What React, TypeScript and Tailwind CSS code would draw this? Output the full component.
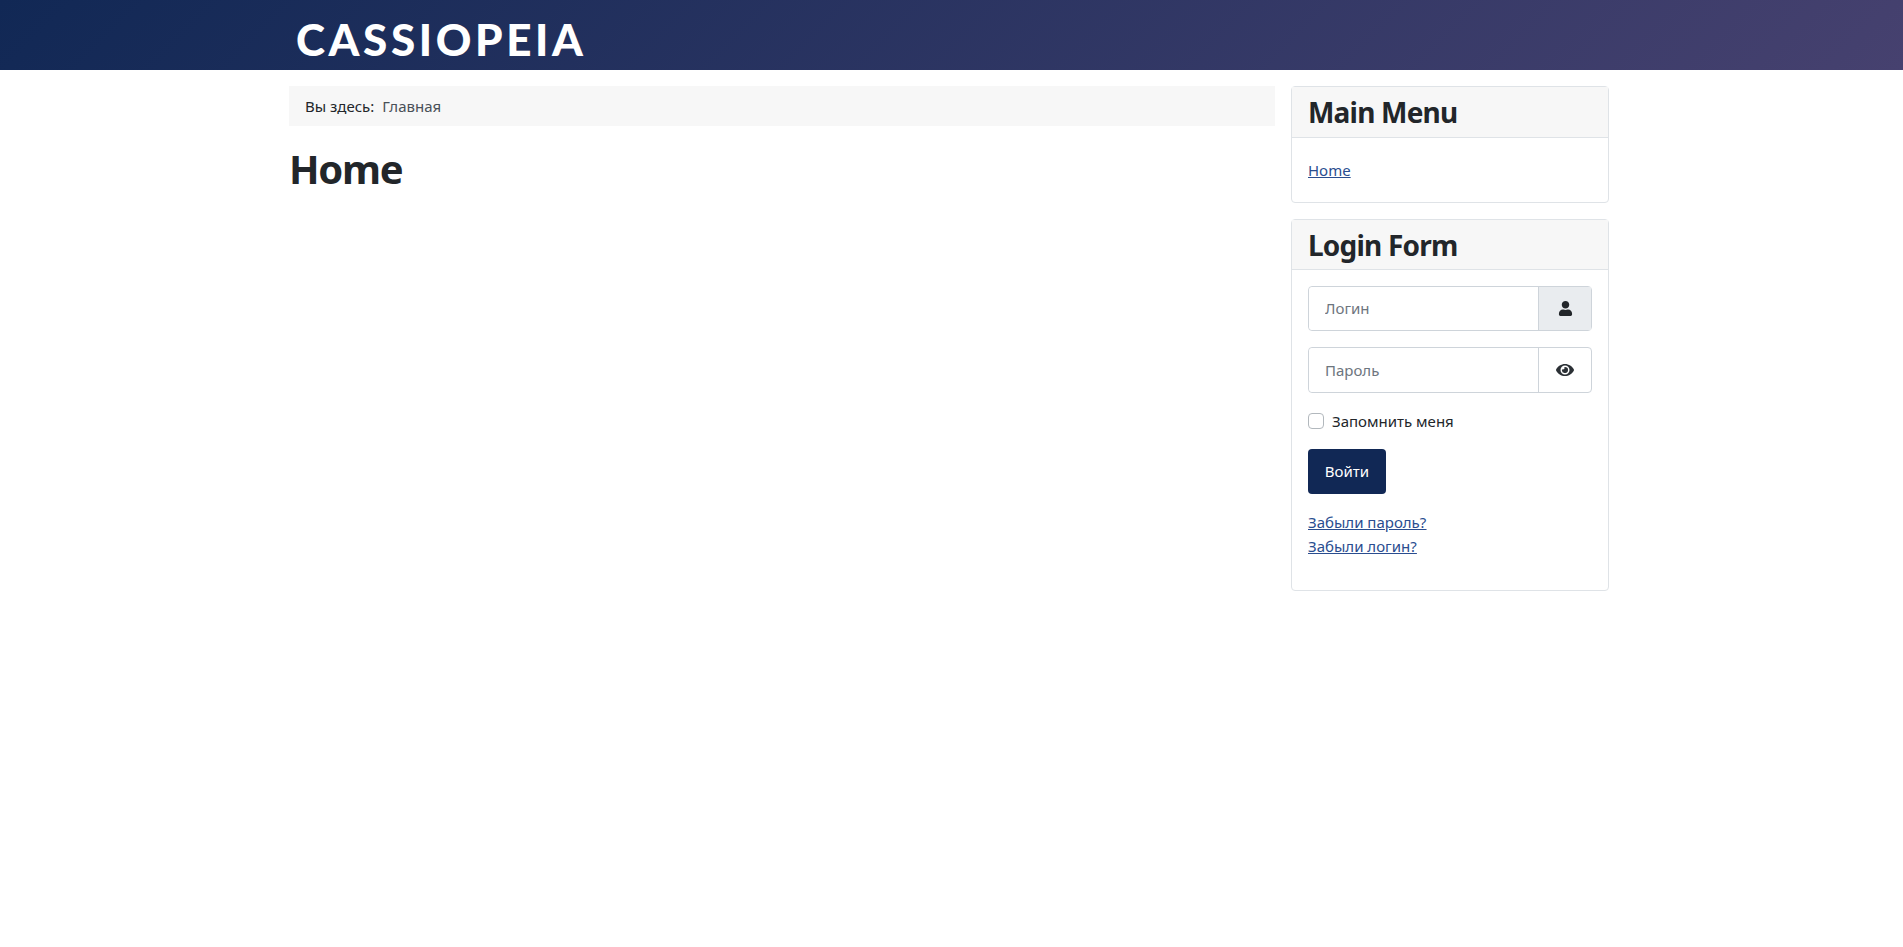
import { FaEye, FaUser } from "react-icons/fa";

function Card({ title, headerClass, children }: { title: string; headerClass: string; children: React.ReactNode }) {
  return (
    <div className="rounded border border-[#dfe3e7] bg-white">
      <h3
        className={`border-b border-[#dfe3e7] bg-[#f7f7f7] px-4 text-[28px] font-bold tracking-[-0.8px] text-[#22262a] ${headerClass}`}
      >
        {title}
      </h3>
      <div className="p-4">{children}</div>
    </div>
  );
}

export default function App() {
  return (
    <div className="min-h-[947px] bg-white text-[16px] text-[#22262a] [font-family:'Noto_Sans','Open_Sans',sans-serif]">
      <header className="h-[70px] bg-[linear-gradient(135deg,#112855_0%,#46416f_100%)]">
        <div className="ml-[289px] pl-[7px]">
          <div className="text-[44px] font-black leading-[78px] tracking-[3.6px] text-white [font-family:Lato,sans-serif]">
            CASSIOPEIA
          </div>
        </div>
      </header>
      <main className="ml-[289px] mt-4 grid w-[1320px] grid-cols-[986px_318px] gap-4">
        <div>
          <nav className="flex h-10 items-center gap-2 bg-[#f7f7f7] px-4 text-[15px]">
            <span>Вы здесь:</span>
            <span className="text-[#495057]">Главная</span>
          </nav>
          <h1 className="mt-[19px] text-[40px] font-bold leading-[48px] tracking-[-1.3px] text-[#22262a]">Home</h1>
        </div>
        <aside className="flex flex-col gap-4">
          <Card title="Main Menu" headerClass="h-[51px] leading-[51px]">
            <div className="py-1">
              <a href="#" className="block text-[15px] leading-6 text-[#2a4d8f] underline">
                Home
              </a>
            </div>
          </Card>
          <Card title="Login Form" headerClass="h-[50px] leading-[50px]">
            <div className="flex h-[45px] rounded border border-[#ced4da]">
              <input
                placeholder="Логин"
                className="min-w-0 flex-1 rounded-l bg-white px-4 text-[15px] placeholder:text-[#6d757e]"
              />
              <span className="flex w-[53px] items-center justify-center border-l border-[#ced4da] bg-[#e9ecef] text-[#22262a]">
                <FaUser size={15} />
              </span>
            </div>
            <div className="mt-4 flex h-[46px] rounded border border-[#ced4da]">
              <input
                placeholder="Пароль"
                className="min-w-0 flex-1 rounded-l bg-white px-4 text-[15px] placeholder:text-[#6d757e]"
              />
              <span className="flex w-[53px] items-center justify-center border-l border-[#ced4da] text-[#2b3035]">
                <FaEye size={18} />
              </span>
            </div>
            <label className="mt-4 flex h-6 items-center gap-2 text-[15px]">
              <span className="h-4 w-4 rounded border border-[#b2b8bd] bg-white" />
              Запомнить меня
            </label>
            <button className="mt-4 h-[45px] w-[78px] rounded bg-[#112855] text-[15px] text-white">Войти</button>
            <div className="mt-4 flex flex-col items-start pb-4 text-[15px] leading-6 text-[#2a4d8f] underline">
              <a href="#">Забыли пароль?</a>
              <a href="#">Забыли логин?</a>
            </div>
          </Card>
        </aside>
      </main>
    </div>
  );
}
